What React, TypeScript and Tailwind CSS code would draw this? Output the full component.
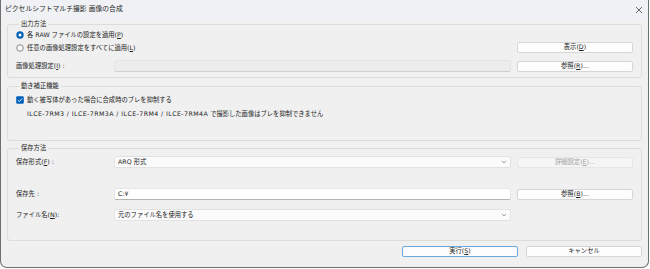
import React from "react";

const F = "font-['DejaVu_Sans','Noto_Sans_CJK_JP',sans-serif]";

function K({ k }: { k: string }) {
  return (
    <>
      (<u className="underline underline-offset-[1px] decoration-[0.5px]">{k}</u>)
    </>
  );
}

function Radio({ checked }: { checked?: boolean }) {
  return (
    <svg width="8" height="8" viewBox="0 0 8 8" className="shrink-0">
      {checked ? (
        <>
          <circle cx="4" cy="4" r="3.7" fill="#005fb8" />
          <circle cx="4" cy="4" r="1.5" fill="#ffffff" />
        </>
      ) : (
        <circle cx="4" cy="4" r="3.3" fill="#f7f7f7" stroke="#6e6e6e" strokeWidth="0.8" />
      )}
    </svg>
  );
}

function Check() {
  return (
    <svg width="8" height="8" viewBox="0 0 8 8" className="shrink-0">
      <rect x="0.2" y="0.2" width="7.6" height="7.6" rx="1.2" fill="#005fb8" />
      <path d="M1.9 4.1 L3.3 5.5 L6.1 2.5" fill="none" stroke="#fff" strokeWidth="0.9" />
    </svg>
  );
}

function Btn({
  children,
  disabled,
  primary,
}: {
  children: React.ReactNode;
  disabled?: boolean;
  primary?: boolean;
}) {
  const cls = disabled
    ? "bg-[#f5f5f5] border-[#e6e6e6] text-[#a3a3a3]"
    : primary
    ? "bg-[#fdfdfd] border-[#6aa8dc] text-[#222]"
    : "bg-[#fdfdfd] border-[#d6d6d6] text-[#222]";
  return (
    <div
      className={`w-[116px] h-[11px] shrink-0 border rounded-[2px] flex items-center justify-center leading-none ${cls}`}
    >
      {children}
    </div>
  );
}

function Chevron() {
  return (
    <svg width="6" height="4" viewBox="0 0 6 4" className="shrink-0">
      <path d="M0.8 0.8 L3 3 L5.2 0.8" fill="none" stroke="#7a7a7a" strokeWidth="0.7" />
    </svg>
  );
}

function Select({ text }: { text: string }) {
  return (
    <div className="w-[397px] h-[12px] shrink-0 bg-[#fbfbfb] border border-[#e2e2e2] rounded-[2px] flex items-center justify-between pl-[3px] pr-[3px] leading-none">
      <span>{text}</span>
      <Chevron />
    </div>
  );
}

function Group({
  title,
  className = "",
  children,
}: {
  title: string;
  className?: string;
  children: React.ReactNode;
}) {
  return (
    <fieldset
      className={`m-0 border border-[#dcdcdc] rounded-[3px] pl-[8px] pr-[8px] pt-0 min-w-0 ${className}`}
    >
      <legend className="ml-[3px] px-[2px] h-[10px] leading-[10px] text-[#222]">{title}</legend>
      {children}
    </fieldset>
  );
}

export default function App() {
  return (
    <div
      className={`${F} text-[6.3px] text-[#222] w-[649px] h-[268px] bg-[#f0f0f0] border-l border-r border-b border-[#6f6f6f] rounded-b-[7px] flex flex-col overflow-hidden`}
    >
      {/* title bar */}
      <div className="h-[19px] shrink-0 flex items-center justify-between pl-[4px] pr-[5px] bg-[#eff1f4]">
        <span className="text-[6.8px] text-[#1f1f1f] leading-none">ピクセルシフトマルチ撮影 画像の合成</span>
        <svg width="8" height="8" viewBox="0 0 8 8">
          <path d="M1 1 L7 7 M7 1 L1 7" stroke="#444" strokeWidth="0.8" />
        </svg>
      </div>

      <div className="px-[6px] flex flex-col">
        {/* 出力方法 */}
        <Group title="出力方法" className="pb-[5px]">
          <div className="h-[10px] mt-[1px] flex items-center gap-[3px]">
            <Radio checked />
            <span className="leading-none">
              各 RAW ファイルの設定を適用<K k="P" />
            </span>
          </div>
          <div className="h-[12px] mt-[1px] flex items-center gap-[6px]">
            <div className="w-[495px] h-[10px] self-end flex items-center gap-[3px]">
              <Radio />
              <span className="leading-none">
                任意の画像処理設定をすべてに適用<K k="L" />
              </span>
            </div>
            <Btn>
              表示<K k="D" />
            </Btn>
          </div>
          <div className="h-[12px] mt-[7px] flex items-center gap-[6px]">
            <div className="w-[92px] shrink-0 leading-none">
              画像処理設定<K k="I" /> :
            </div>
            <div className="w-[397px] h-[12px] shrink-0 bg-[#ececec] border border-[#e4e4e4] border-b-[#cfcfcf] rounded-[2px]" />
            <Btn>
              参照<K k="R" />...
            </Btn>
          </div>
        </Group>

        {/* 動き補正機能 */}
        <Group title="動き補正機能" className="mt-[3px] pb-[21px]">
          <div className="h-[10px] mt-[4px] flex items-center gap-[3px]">
            <Check />
            <span className="leading-none">動く被写体があった場合に合成時のブレを抑制する</span>
          </div>
          <div className="h-[10px] mt-[4px] pl-[11px] flex items-center leading-none">
            <span className="tracking-[0.4px]">ILCE-7RM3 / ILCE-7RM3A / ILCE-7RM4 / ILCE-7RM4A</span>
            <span>&nbsp;で撮影した画像はブレを抑制できません</span>
          </div>
        </Group>

        {/* 保存方法 */}
        <Group title="保存方法" className="mt-[2px] pb-[19px]">
          <div className="h-[12px] mt-[3px] flex items-center gap-[6px]">
            <div className="w-[92px] shrink-0 leading-none">
              保存形式<K k="F" /> :
            </div>
            <Select text="ARQ 形式" />
            <Btn disabled>
              詳細設定<K k="E" />...
            </Btn>
          </div>
          <div className="h-[12px] mt-[20px] flex items-center gap-[6px]">
            <div className="w-[92px] shrink-0 leading-none">保存先 :</div>
            <div className="w-[397px] h-[12px] shrink-0 bg-white border border-[#e6e6e6] border-b-[#b5b5b5] rounded-[2px] flex items-center pl-[3px] leading-none">
              C:¥
            </div>
            <Btn>
              参照<K k="B" />...
            </Btn>
          </div>
          <div className="h-[12px] mt-[9px] flex items-center gap-[6px]">
            <div className="w-[92px] shrink-0 leading-none">
              ファイル名<K k="N" />:
            </div>
            <Select text="元のファイル名を使用する" />
          </div>
        </Group>

        {/* bottom buttons */}
        <div className="mt-[5px] flex justify-end gap-[8px]">
          <Btn primary>
            実行<K k="S" />
          </Btn>
          <Btn>キャンセル</Btn>
        </div>
      </div>
    </div>
  );
}
